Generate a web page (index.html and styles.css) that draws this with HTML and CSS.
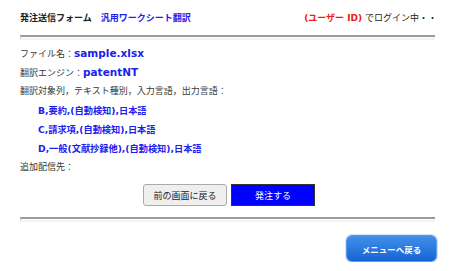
FILE: index.html
```html
<!DOCTYPE html>
<html lang="ja">
<head>
    <meta charset="UTF-8">
    <title>発注送信フォーム</title>
    <link rel="stylesheet" href="styles.css">
</head>
<body>
    <div class="page">
        <div class="header">
            <div class="title">発注送信フォーム<span class="sub">汎用ワークシート翻訳</span></div>
            <div class="login"><span class="user">(ユーザー ID)</span> でログイン中・・</div>
        </div>
        <div class="rule"></div>
        <div class="info">
            <div class="row">ファイル名：<span class="val">sample.xlsx</span></div>
            <div class="row">翻訳エンジン：<span class="val">patentNT</span></div>
            <div class="row">翻訳対象列，テキスト種別，入力言語，出力言語：</div>
            <div class="row item">B,要約,(自動検知),日本語</div>
            <div class="row item">C,請求項,(自動検知),日本語</div>
            <div class="row item">D,一般(文献抄録他),(自動検知),日本語</div>
            <div class="row">追加配信先：</div>
        </div>
        <div class="buttons">
            <button class="back">前の画面に戻る</button>
            <button class="order">発注する</button>
        </div>
        <div class="rule"></div>
        <div class="footer">
            <button class="menu">メニューへ戻る</button>
        </div>
    </div>
</body>
</html>
```
FILE: styles.css
```css
body {
    margin: 0;
    font-family: "DejaVu Sans", "Noto Sans CJK JP", sans-serif;
    font-size: 9px;
    color: #383838;
    background: #fff;
}
.page {
    padding: 10px 15px 0 20px;
}
.header {
    display: flex;
    justify-content: space-between;
    align-items: center;
    height: 16px;
    line-height: 16px;
}
.title {
    font-weight: bold;
    color: #222;
}
.sub {
    color: #2020ee;
    margin-left: 9px;
}
.login {
    color: #222;
    margin-right: -2px;
}
.user {
    color: #f01818;
    font-weight: bold;
}
.rule {
    height: 1px;
    border-top: 2px solid #9a9a9a;
    border-left: 1px solid #ccc;
    border-bottom: 2px solid #f2f2f2;
    margin-top: 9px;
}
.info {
    padding-top: 4px;
}
.row {
    height: 19px;
    line-height: 19px;
}
.val {
    color: #2020ee;
    font-weight: bold;
    font-size: 10.5px;
}
.item {
    padding-left: 18px;
    color: #2020ee;
    font-weight: bold;
    font-size: 9.2px;
}
.buttons {
    display: flex;
    justify-content: center;
    gap: 4px;
    margin-top: 7px;
    padding-left: 3px;
}
.buttons button {
    width: 84px;
    height: 22px;
    font-family: inherit;
    font-size: 9px;
    padding: 0;
}
.back {
    background: #efefef;
    border: 1px solid #aaa;
    border-radius: 3px;
    color: #222;
}
.order {
    background: #0000ff;
    border: 1px solid #333;
    color: #fff;
}
.buttons + .rule {
    margin-top: 11px;
}
.footer {
    display: flex;
    justify-content: flex-end;
    padding-top: 13px;
}
.menu {
    width: 91px;
    height: 27px;
    margin-right: -2px;
    border: 1px solid #5a9ae8;
    border-radius: 6px;
    background: linear-gradient(#4290e8, #1564d6);
    color: #fff;
    font-family: inherit;
    font-size: 8.5px;
    font-weight: bold;
    box-shadow: 0 0 0 1px #d3e3f6;
}
```
